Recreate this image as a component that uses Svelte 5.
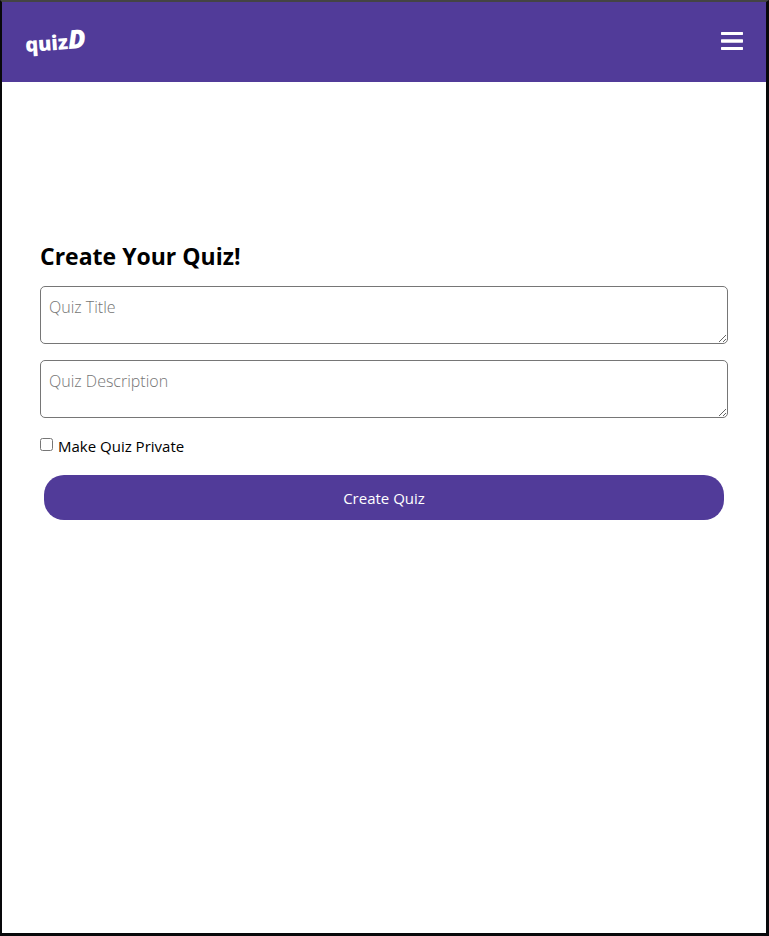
<script>
  let title = $state('');
  let description = $state('');
  let isPrivate = $state(false);
</script>

<div class="window">
  <header>
    <a class="logo" href="#home" aria-label="quizD">quiz<span>D</span></a>
    <button class="menu" type="button" aria-label="Open menu">
      <svg width="22" height="18" viewBox="0 0 22 18" aria-hidden="true">
        <path
          d="M.5 0h21l.5.5v2l-.5.5h-21l-.5-.5v-2zM.5 7.3h21l.5.5v2.400l-.5.5h-21l-.5-.5V7.800zM.5 15h21l.5.5v2l-.5.5h-21l-.5-.5v-2z"
          fill="#fff"
        />
      </svg>
    </button>
  </header>

  <main>
    <form onsubmit={(event) => event.preventDefault()}>
      <h1>Create Your Quiz!</h1>
      <textarea aria-label="Quiz Title" placeholder="Quiz Title" bind:value={title}></textarea>
      <textarea
        aria-label="Quiz Description"
        placeholder="Quiz Description"
        bind:value={description}
      ></textarea>
      <label>
        <input type="checkbox" bind:checked={isPrivate} />
        <span>Make Quiz Private</span>
      </label>
      <button class="submit" type="submit">Create Quiz</button>
    </form>
  </main>
</div>

<style>
  :global(body) {
    margin: 0;
    background: #050505;
  }

  .window {
    box-sizing: border-box;
    min-height: 100vh;
    display: flex;
    flex-direction: column;
    border: 2px solid #08080a;
    border-top-color: #444;
    border-bottom-width: 3px;
    border-right-width: 3px;
    background: #fff;
    color: #000;
    font: 15px/24px 'Segoe UI', 'Open Sans', 'Noto Sans', sans-serif;
  }

  header {
    box-sizing: border-box;
    height: 80px;
    padding: 0 23px 2px;
    display: flex;
    align-items: center;
    justify-content: space-between;
    background: #513b99;
  }

  .logo {
    color: #fff;
    font-size: 20px;
    font-weight: 800;
    line-height: 32px;
    text-decoration: none;
    transform: rotate(-4deg);
  }

  .logo span {
    font-size: 26px;
    font-style: italic;
  }

  .menu {
    padding: 0;
    border: 0;
    background: none;
    display: flex;
    cursor: pointer;
  }

  main {
    padding: 156px 38px 24px;
  }

  form {
    display: flex;
    flex-direction: column;
  }

  h1 {
    margin: 0 0 12px;
    font-size: 23px;
    line-height: 36px;
    font-weight: 700;
  }

  textarea {
    box-sizing: border-box;
    width: 100%;
    height: 58px;
    margin: 0 0 16px;
    padding: 8px;
    border: 1px solid #767676;
    border-radius: 5px;
    background: #fff;
    color: #000;
    font: inherit;
    font-size: 16px;
    font-weight: 300;
    resize: both;
  }

  textarea::placeholder {
    color: #757575;
  }

  label {
    display: flex;
    align-items: flex-start;
    gap: 5px;
    margin-bottom: 17px;
  }

  input {
    width: 13px;
    height: 13px;
    margin: 4px 0 0;
  }

  .submit {
    height: 45px;
    margin: 0 4px;
    padding: 0 16px;
    border: 0;
    border-radius: 20px;
    background: #513b99;
    color: #fff;
    font: inherit;
    cursor: pointer;
  }
</style>
